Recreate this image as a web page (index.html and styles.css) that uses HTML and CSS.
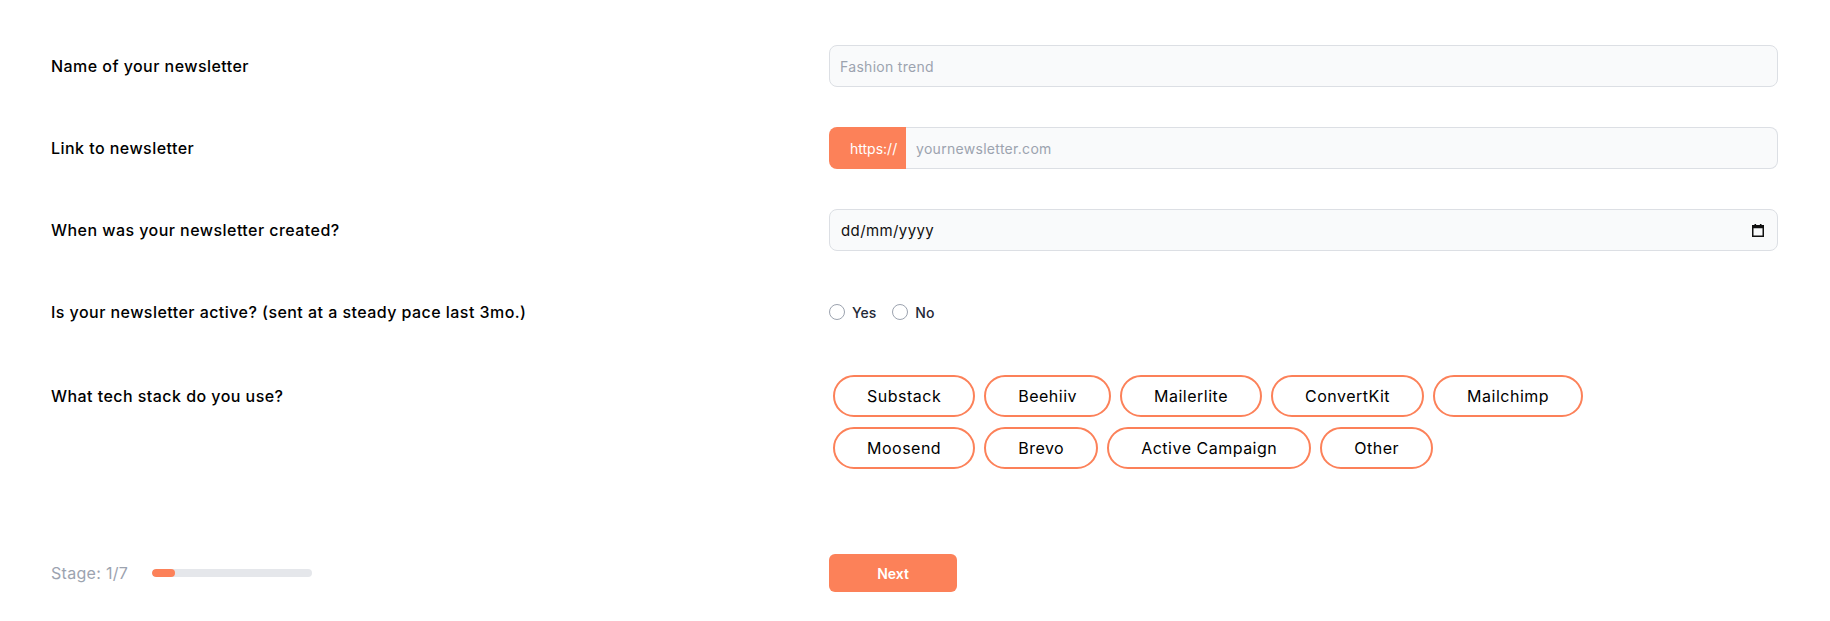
FILE: index.html
```html
<!DOCTYPE html>
<html lang="en">
<head>
<meta charset="utf-8">
<title>Newsletter form</title>
<link rel="stylesheet" href="styles.css">
</head>
<body>
<main class="page">
  <form class="form">
    <div class="row">
      <label class="label">Name of your newsletter</label>
      <div class="field">
        <input class="input" type="text" placeholder="Fashion trend">
      </div>
    </div>
    <div class="row">
      <label class="label">Link to newsletter</label>
      <div class="field group">
        <span class="prefix">https://</span>
        <input class="input input-suffix" type="text" placeholder="yournewsletter.com">
      </div>
    </div>
    <div class="row">
      <label class="label">When was your newsletter created?</label>
      <div class="field">
        <div class="input date">
          <span class="date-text">dd/mm/yyyy</span>
          <svg class="cal" width="12" height="13" viewBox="0 0 12 13" aria-hidden="true">
            <rect x="2.5" y="0" width="1.6" height="2.5" fill="#111"/>
            <rect x="7.9" y="0" width="1.6" height="2.5" fill="#111"/>
            <rect x="0.75" y="1.75" width="10.5" height="10.5" fill="none" stroke="#111" stroke-width="1.5"/>
            <rect x="0.75" y="1.75" width="10.5" height="2.5" fill="#111"/>
          </svg>
        </div>
      </div>
    </div>
    <div class="row">
      <label class="label">Is your newsletter active? (sent at a steady pace last 3mo.)</label>
      <div class="field radios">
        <label class="radio"><input type="radio" name="active"><span>Yes</span></label>
        <label class="radio"><input type="radio" name="active"><span>No</span></label>
      </div>
    </div>
    <div class="row row-top">
      <label class="label label-tall">What tech stack do you use?</label>
      <div class="field chips">
        <button type="button" class="chip">Substack</button>
        <button type="button" class="chip">Beehiiv</button>
        <button type="button" class="chip">Mailerlite</button>
        <button type="button" class="chip">ConvertKit</button>
        <button type="button" class="chip">Mailchimp</button>
        <button type="button" class="chip chip-break">Moosend</button>
        <button type="button" class="chip">Brevo</button>
        <button type="button" class="chip">Active Campaign</button>
        <button type="button" class="chip">Other</button>
      </div>
    </div>
    <div class="row footer">
      <div class="label stage">
        <span class="stage-text">Stage: 1/7</span>
        <div class="progress"><div class="progress-fill" style="width: 14.3%"></div></div>
      </div>
      <div class="field">
        <button type="button" class="next">Next</button>
      </div>
    </div>
  </form>
</main>
</body>
</html>
```
FILE: styles.css
```css
* { box-sizing: border-box; }

html, body {
  margin: 0;
  padding: 0;
  background: #ffffff;
}

body {
  font-family: "Inter", "Noto Sans", sans-serif;
  color: #000;
}

.page {
  padding: 45px 52px 0 51px;
}

.form {
  display: flex;
  flex-direction: column;
  gap: 40px;
}

.row {
  display: flex;
  align-items: center;
  min-height: 42px;
}

.row-top {
  align-items: flex-start;
}

.label {
  width: 778px;
  flex: none;
  font-size: 16px;
  font-weight: 500;
  letter-spacing: 0.45px;
  color: #000;
}

.label-tall {
  line-height: 42px;
  margin-top: 2px;
}

.field {
  flex: 1;
  min-width: 0;
}

.input {
  display: block;
  width: 100%;
  height: 42px;
  padding: 0 10px;
  border: 1px solid #dcdfe4;
  border-radius: 8px;
  background: #f9fafb;
  font-family: inherit;
  font-size: 14px;
  letter-spacing: 0.3px;
  color: #111;
  outline: none;
}

.input::placeholder {
  color: #9ca3af;
}

.group {
  display: flex;
}

.prefix {
  flex: none;
  width: 77px;
  height: 42px;
  display: flex;
  align-items: center;
  padding-left: 21px;
  background: #fc8159;
  color: #fff;
  font-size: 14px;
  border-radius: 8px 0 0 8px;
}

.input-suffix {
  border-left: none;
  border-radius: 0 8px 8px 0;
}

.date {
  display: flex;
  align-items: center;
  justify-content: space-between;
  padding: 0 13px 0 11px;
}

.date-text {
  font-size: 15px;
  color: #111;
  letter-spacing: 0.4px;
}

.cal {
  display: block;
  margin-top: 1px;
}

.radios {
  display: flex;
  align-items: center;
  gap: 16px;
}

.radio {
  display: flex;
  align-items: center;
  gap: 7px;
  font-size: 14px;
  font-weight: 500;
  color: #1f2937;
}

.radio input {
  appearance: none;
  -webkit-appearance: none;
  margin: 0;
  width: 16px;
  height: 16px;
  border: 1px solid #9ca3af;
  border-radius: 50%;
  background: #fff;
}

.chips {
  display: flex;
  flex-wrap: wrap;
  gap: 10px 9px;
  padding: 2px 0 0 4px;
  max-width: 760px;
}

.chip {
  height: 42px;
  padding: 0 32px;
  border: 2px solid #fc8159;
  border-radius: 21px;
  background: #fff;
  font-family: inherit;
  font-size: 16px;
  font-weight: 400;
  letter-spacing: 0.5px;
  color: #000;
  cursor: pointer;
}

.footer {
  margin-top: 45px;
  min-height: 38px;
}

.stage {
  display: flex;
  align-items: center;
  gap: 24px;
}

.stage-text {
  font-size: 16px;
  font-weight: 400;
  letter-spacing: 0.3px;
  color: #9ca3af;
}

.progress {
  width: 160px;
  height: 8px;
  border-radius: 4px;
  background: #e5e7eb;
  overflow: hidden;
}

.progress-fill {
  height: 100%;
  border-radius: 4px;
  background: #fc8159;
}

.next {
  display: block;
  width: 128px;
  height: 38px;
  border: none;
  border-radius: 6px;
  background: #fc8159;
  color: #fff;
  font-family: "Inter", "Liberation Sans", sans-serif;
  font-size: 14px;
  font-weight: 600;
  cursor: pointer;
}
```
